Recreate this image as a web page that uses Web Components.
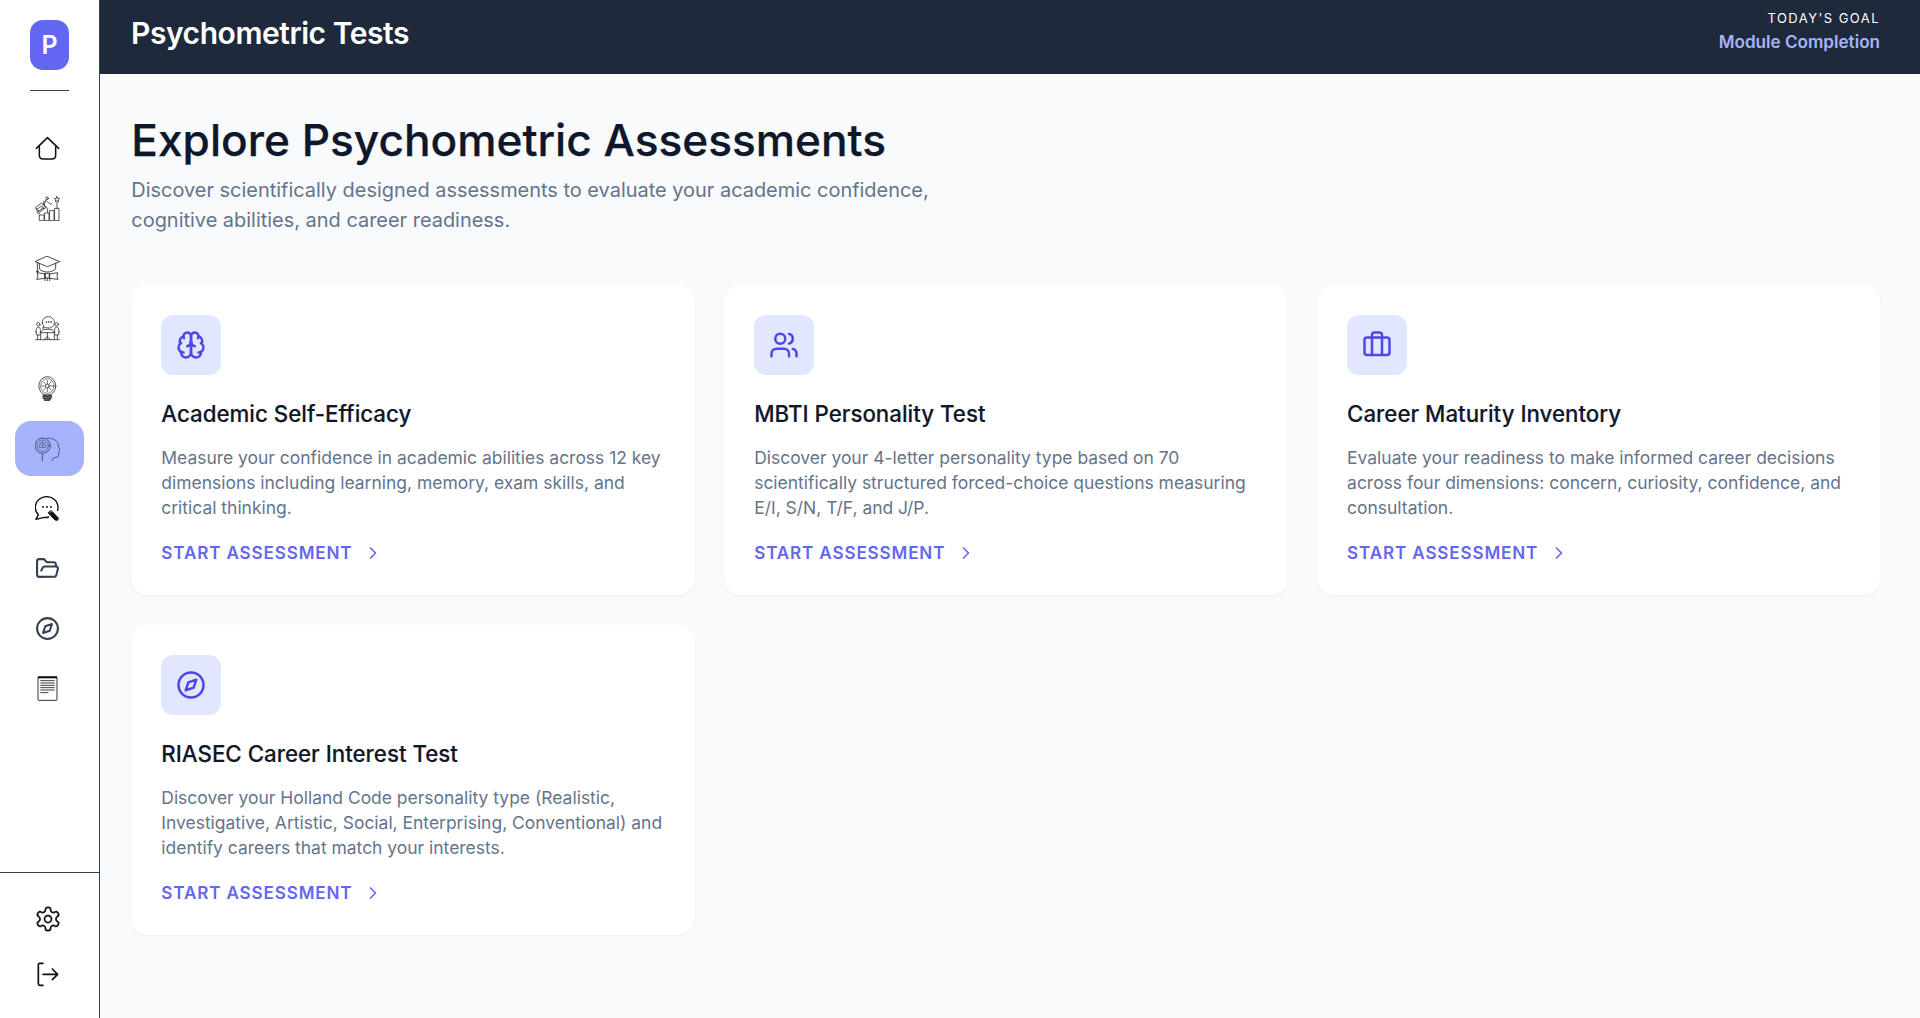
<!DOCTYPE html>
<html lang="en"><head><meta charset="utf-8"><title>Psychometric Tests</title>
<style>
html,body{margin:0;height:100%}
body{font-family:Inter,"Liberation Sans",sans-serif;background:#f8fafc;color:#0f172a;line-height:1.6;overflow:hidden}
</style></head><body>
<ps-app>
  <ps-sidebar slot="side">
    <ps-nav icon="home"></ps-nav>
    <ps-nav icon="growth"></ps-nav>
    <ps-nav icon="grad"></ps-nav>
    <ps-nav icon="meet"></ps-nav>
    <ps-nav icon="bulb"></ps-nav>
    <ps-nav icon="head" active></ps-nav>
    <ps-nav icon="chat"></ps-nav>
    <ps-nav icon="folder"></ps-nav>
    <ps-nav icon="navcompass"></ps-nav>
    <ps-nav icon="doc"></ps-nav>
    <ps-nav slot="foot" icon="settings"></ps-nav>
    <ps-nav slot="foot" icon="logout"></ps-nav>
  </ps-sidebar>
  <ps-topbar slot="top" title="Psychometric Tests" label="Today's Goal" goal="Module Completion"></ps-topbar>
  <ps-intro heading="Explore Psychometric Assessments">Discover scientifically designed assessments to evaluate your academic confidence, cognitive abilities, and career readiness.</ps-intro>
  <ps-grid>
    <ps-card icon="brain" heading="Academic Self-Efficacy">Measure your confidence in academic abilities across 12 key dimensions including learning, memory, exam skills, and critical thinking.</ps-card>
    <ps-card icon="users" heading="MBTI Personality Test">Discover your 4-letter personality type based on 70 scientifically structured forced-choice questions measuring E/I, S/N, T/F, and J/P.</ps-card>
    <ps-card icon="briefcase" heading="Career Maturity Inventory">Evaluate your readiness to make informed career decisions across four dimensions: concern, curiosity, confidence, and consultation.</ps-card>
    <ps-card icon="compass" heading="RIASEC Career Interest Test">Discover your Holland Code personality type (Realistic, Investigative, Artistic, Social, Enterprising, Conventional) and identify careers that match your interests.</ps-card>
  </ps-grid>
</ps-app>
<script>
const lucide=(body,sw=2,vb="0 0 24 24")=>`<svg viewBox="${vb}" fill="none" stroke="currentColor" stroke-width="${sw}" stroke-linecap="round" stroke-linejoin="round">${body}</svg>`;
const fine=(body,sw=2.4)=>`<svg viewBox="0 0 75 75" fill="none" stroke="#262b33" stroke-width="${sw}" stroke-linecap="round" stroke-linejoin="round">${body}</svg>`;
const ICONS={
 home:`<svg viewBox="0 -2 75 75" fill="none" stroke="#111" stroke-width="4.6" stroke-linecap="round" stroke-linejoin="round"><path d="M4 35 37.5 3 71 35"/><path d="M13 30v26q0 11 11 11h27q11 0 11-11V30"/></svg>`,
 growth:fine(`<rect x="14" y="57" width="13" height="17"/><rect x="30" y="51" width="12" height="23"/><rect x="45" y="44" width="12" height="30"/><rect x="60" y="37" width="12" height="37"/><path d="M66 2l2.4 5.2 5.6.6-4.2 3.8 1.2 5.6-5-3-5 3 1.2-5.6-4.2-3.8 5.6-.6z"/><path d="M66 18v19"/><circle cx="36" cy="7" r="4"/><path d="M34 13l-8 14 10 8 2 14M37 17l9 8 5-3M28 27l-4-8 8-5"/><path d="M2 34 20 21l12 14-18 13z"/><path d="M6 40 20 30l6 8M10 46 26 35"/><path d="M6 50l8 4M3 38l6 10"/>`),
 grad:fine(`<path d="M37 1 74 17 37 32 1 17z"/><path d="M13 22v17c6 6 15 9 24 9s18-3 25-9V22"/><path d="M7 20v25"/><circle cx="7" cy="47" r="2.5"/><path d="M30 54 7 50 9 60 5 70l25-3zM44 54l24-4-2 10 3 10-25-3z"/><path d="M30 52h14v14H30zM30 67v7M37 67v7M44 67v7"/>`,2.6),
 meet:fine(`<path d="M22 20c0-10 8-18 18-18s18 8 18 18-8 16-18 16c-3 0-7-1-9-2l-8 3 3-7c-2-3-4-6-4-10z"/><circle cx="34" cy="18" r="1"/><circle cx="41" cy="18" r="1"/><circle cx="48" cy="18" r="1"/><circle cx="10" cy="25" r="5"/><circle cx="65" cy="25" r="5"/><path d="M15 50H60M17 50c2-5 6-8 10-10h21c5 2 8 5 10 10"/><path d="M3 48c0-8 2-14 7-15 6 0 6 8 7 15 0 4 0 7-1 9H5c-1-3-2-6-2-9zM72 48c0-8-2-14-7-15-6 0-6 8-7 15 0 4 0 7 1 9h11c1-3 2-6 2-9z"/><path d="M37 50v20M37 62l-9 8M37 62l9 8M8 57v13M17 57v13M58 57v13M67 57v13M2 71h71"/>`,2.4),
 bulb:fine(`<ellipse cx="37" cy="30" rx="25.5" ry="28"/><ellipse cx="37" cy="30" rx="20" ry="22" stroke-width="1.8"/><circle cx="37" cy="30" r="5.5" stroke-width="2"/><path d="M37 13v11M37 36v11M20 30h11M43 30h11M26 18l7 8M41 34l7 8M48 18l-7 8M33 34l-7 8" stroke-width="2"/><path d="M25 57h24v5H25z" fill="#666"/><path d="M25 62h24v5H25z" fill="#999"/><path d="M27 67h20l-3 7H30z" fill="#555"/>`,2.4),
 head:fine(`<circle cx="23" cy="29" r="23" stroke="#1f2a44"/><circle cx="23" cy="29" r="17" stroke="#1f2a44" stroke-width="1.6"/><path d="M13 34c-3-8 3-15 9-15 8 0 13 6 10 15zM17 27l6 5 5-7M22 19v8" stroke="#1f2a44" stroke-width="1.6"/><path d="M36 6c5 0 10 1 14 2 12 3 20 11 20 22 0 3 1 6 3 9 2 4 4 7 2 8l-5 3c1 4 2 9-2 13-3 2-9 1-13 3-2 2-3 6-3 10" stroke="#1f2a44" stroke-width="2"/><path d="M22 55v20" stroke="#1f2a44"/>`,2.2),
 chat:`<svg viewBox="0 0 75 75" fill="none" stroke="#111" stroke-width="4.2" stroke-linecap="round" stroke-linejoin="round"><path d="M41 63c-4 2-9 2-14 1L3 70l7-14C4 50 1 43 1 35 1 16 16 2 35 2s34 14 34 33c0 3 0 6-1 8"/><circle cx="24" cy="33" r="1" /><circle cx="36" cy="33" r="1"/><circle cx="48" cy="33" r="1"/><path d="M49 44 70 66l-2 7-8-1-20-21z" fill="#111" stroke-width="3"/><path d="M46 49 52 44" stroke="#fff" stroke-width="1.6"/></svg>`,
 folder:lucide(`<path d="m6 14 1.5-2.9A2 2 0 0 1 9.24 10H20a2 2 0 0 1 1.94 2.5l-1.54 6a2 2 0 0 1-1.95 1.5H4a2 2 0 0 1-2-2V5a2 2 0 0 1 2-2h3.9a2 2 0 0 1 1.69.9l.81 1.2a2 2 0 0 0 1.67.9H18a2 2 0 0 1 2 2v2"/>`),
 navcompass:lucide(`<circle cx="12" cy="12" r="10"/><path d="M16.24 7.76 14.12 14.12 7.76 16.24 9.88 9.88z"/>`),
 doc:`<svg viewBox="0 0 75 75" fill="none" stroke="#111" stroke-width="2.6"><rect x="9" y="2" width="57" height="71" rx="2"/><rect x="9" y="2" width="57" height="5" fill="#111" stroke="none"/><path d="M16 14h43M16 21h43M16 28h43M16 35h43M16 42h43M16 50h24" stroke="#222" stroke-width="2.6"/></svg>`,
 settings:`<svg style="width:28px;height:28px;margin-top:-2px" viewBox="0 0 24 24" fill="none" stroke="#111" stroke-width="1.5" stroke-linecap="round" stroke-linejoin="round"><path d="M12.22 2h-.44a2 2 0 0 0-2 2v.18a2 2 0 0 1-1 1.73l-.43.25a2 2 0 0 1-2 0l-.15-.08a2 2 0 0 0-2.73.73l-.22.38a2 2 0 0 0 .73 2.73l.15.1a2 2 0 0 1 1 1.72v.51a2 2 0 0 1-1 1.74l-.15.09a2 2 0 0 0-.73 2.73l.22.38a2 2 0 0 0 2.73.73l.15-.08a2 2 0 0 1 2 0l.43.25a2 2 0 0 1 1 1.73V20a2 2 0 0 0 2 2h.44a2 2 0 0 0 2-2v-.18a2 2 0 0 1 1-1.73l.43-.25a2 2 0 0 1 2 0l.15.08a2 2 0 0 0 2.73-.73l.22-.39a2 2 0 0 0-.73-2.73l-.15-.08a2 2 0 0 1-1-1.74v-.5a2 2 0 0 1 1-1.74l.15-.09a2 2 0 0 0 .73-2.73l-.22-.38a2 2 0 0 0-2.73-.73l-.15.08a2 2 0 0 1-2 0l-.43-.25a2 2 0 0 1-1-1.73V4a2 2 0 0 0-2-2z"/><circle cx="12" cy="12" r="3"/></svg>`,
 logout:`<svg viewBox="0 0 75 75" fill="none" stroke="#111" stroke-width="5" stroke-linecap="round" stroke-linejoin="round"><path d="M24 4H14q-4 0-4 4v58q0 4 4 4h10"/><path d="M24 37h44M52 21l16 16-16 16"/></svg>`,
 brain:lucide(`<path d="M12 5a3 3 0 1 0-5.997.125 4 4 0 0 0-2.526 5.77 4 4 0 0 0 .556 6.588A4 4 0 1 0 12 18Z"/><path d="M12 5a3 3 0 1 1 5.997.125 4 4 0 0 1 2.526 5.77 4 4 0 0 1-.556 6.588A4 4 0 1 1 12 18Z"/><path d="M15 13a4.5 4.5 0 0 1-3-4 4.5 4.5 0 0 1-3 4"/><path d="M17.599 6.5a3 3 0 0 0 .399-1.375"/><path d="M6.003 5.125A3 3 0 0 0 6.401 6.5"/><path d="M3.477 10.896a4 4 0 0 1 .585-.396"/><path d="M19.938 10.5a4 4 0 0 1 .585.396"/><path d="M6 18a4 4 0 0 1-1.967-.516"/><path d="M19.967 17.484A4 4 0 0 1 18 18"/>`),
 users:lucide(`<path d="M16 21v-2a4 4 0 0 0-4-4H6a4 4 0 0 0-4 4v2"/><circle cx="9" cy="7" r="4"/><path d="M22 21v-2a4 4 0 0 0-3-3.87"/><path d="M16 3.13a4 4 0 0 1 0 7.75"/>`),
 briefcase:lucide(`<rect x="2" y="7" width="20" height="14" rx="2"/><path d="M16 21V5a2 2 0 0 0-2-2h-4a2 2 0 0 0-2 2v16"/>`,2,"0 1 24 24"),
 compass:lucide(`<circle cx="12" cy="12" r="10"/><path d="M16.24 7.76 14.12 14.12 7.76 16.24 9.88 9.88z"/>`),
 chevron:lucide(`<path d="m9 18 6-6-6-6"/>`)
};
customElements.define('ps-app',class extends HTMLElement{
  constructor(){super();this.attachShadow({mode:'open'}).innerHTML=`<style>
  :host{display:flex;height:100vh;width:100%}
  .col{flex:1;min-width:0;display:flex;flex-direction:column}
  main{flex:1;padding:31px 40px 30px 32.3px;min-height:0}
  </style><slot name="side"></slot><div class="col"><slot name="top"></slot><main><slot></slot></main></div>`;}
});
customElements.define('ps-sidebar',class extends HTMLElement{
  constructor(){super();this.attachShadow({mode:'open'}).innerHTML=`<style>
  :host{display:flex;flex-direction:column;flex:none;width:99px;box-sizing:content-box;background:#fff;border-right:1px solid #334155;margin-right:-1px;height:100%;position:relative;z-index:1}
  .logo{display:flex;align-items:center;justify-content:center;width:39px;height:50px;margin:20px auto 0;border-radius:13px;background:#6366f1;color:#fff;font:600 25px/1 Inter,sans-serif}
  hr{width:39px;height:1px;margin:20px auto 0;border:0;background:#334155}
  .nav{flex:1;display:flex;flex-direction:column;gap:5px;padding:30px 15px 0}
  .foot{border-top:1px solid #334155;display:flex;flex-direction:column;gap:0;padding:19px 15px 0;height:146px;box-sizing:border-box}
  </style><div class="logo">P</div><hr><div class="nav"><slot></slot></div><div class="foot"><slot name="foot"></slot></div>`;}
});
customElements.define('ps-nav',class extends HTMLElement{
  constructor(){super();const n=this.getAttribute('icon');this.attachShadow({mode:'open'}).innerHTML=`<style>
  :host{display:flex;align-items:center;justify-content:center;height:55px;width:69px;border-radius:16px;padding-right:4px;box-sizing:border-box;color:#334155;flex:none}
  :host([active]){background:#a5b4fc}
  svg{display:block;width:25px;height:25px}
  </style>${ICONS[n]}`;}
});
customElements.define('ps-topbar',class extends HTMLElement{
  constructor(){super();const a=k=>this.getAttribute(k);this.attachShadow({mode:'open'}).innerHTML=`<style>
  :host{display:flex;justify-content:space-between;align-items:flex-start;flex:none;height:74px;box-sizing:border-box;background:#1e293b;padding:9px 40px 0 32px;color:#fff}
  h1{margin:0;font-size:30px;font-weight:600;line-height:48px;letter-spacing:-.44px}
  .r{text-align:right;margin-top:-1px}
  .l{font-size:13px;line-height:20px;letter-spacing:1.45px;text-transform:uppercase}
  .g{font-size:17.1px;line-height:27px;font-weight:600;color:#a5b4fc}
  </style><h1>${a('title')}</h1><div class="r"><div class="l">${a('label')}</div><div class="g">${a('goal')}</div></div>`;}
});
customElements.define('ps-intro',class extends HTMLElement{
  constructor(){super();this.attachShadow({mode:'open'}).innerHTML=`<style>
  :host{display:block;margin-bottom:50px}
  h2{margin:0;font-size:44.2px;font-weight:500;line-height:70px;color:#0f172a;-webkit-text-stroke:.25px #0f172a}
  p{margin:0;font-size:19.95px;line-height:30px;color:#64748b;max-width:800px}
  </style><h2>${this.getAttribute('heading')}</h2><p><slot></slot></p>`;}
});
customElements.define('ps-grid',class extends HTMLElement{
  constructor(){super();this.attachShadow({mode:'open'}).innerHTML=`<style>
  :host{display:grid;grid-template-columns:repeat(3,1fr);gap:30px}
  </style><slot></slot>`;}
});
customElements.define('ps-card',class extends HTMLElement{
  constructor(){super();this.attachShadow({mode:'open'}).innerHTML=`<style>
  :host{display:block;background:#fff;border-radius:16px;padding:30px;box-shadow:0 1px 3px rgba(15,23,42,.05);height:310px;box-sizing:border-box}
  .i{width:60px;height:60px;border-radius:12px;background:#e0e7ff;color:#4f46e5;display:flex;align-items:center;justify-content:center;margin-bottom:21px}
  .i svg{width:30px;height:30px;display:block}
  h3{margin:0 0 14px;font-size:22.3px;font-weight:500;line-height:35px;color:#0f172a;-webkit-text-stroke:.15px #0f172a}
  p{margin:0 0 20px;font-size:17.47px;line-height:25px;color:#64748b}
  a{display:flex;align-items:center;gap:11px;font-size:17.1px;font-weight:600;letter-spacing:.85px;line-height:26px;color:#6366f1;text-transform:uppercase}
  a svg{width:20px;height:20px;display:block}
  </style><div class="i">${ICONS[this.getAttribute('icon')]}</div><h3>${this.getAttribute('heading')}</h3><p><slot></slot></p><a>Start Assessment ${ICONS.chevron}</a>`;}
});
</script>
</body></html>
